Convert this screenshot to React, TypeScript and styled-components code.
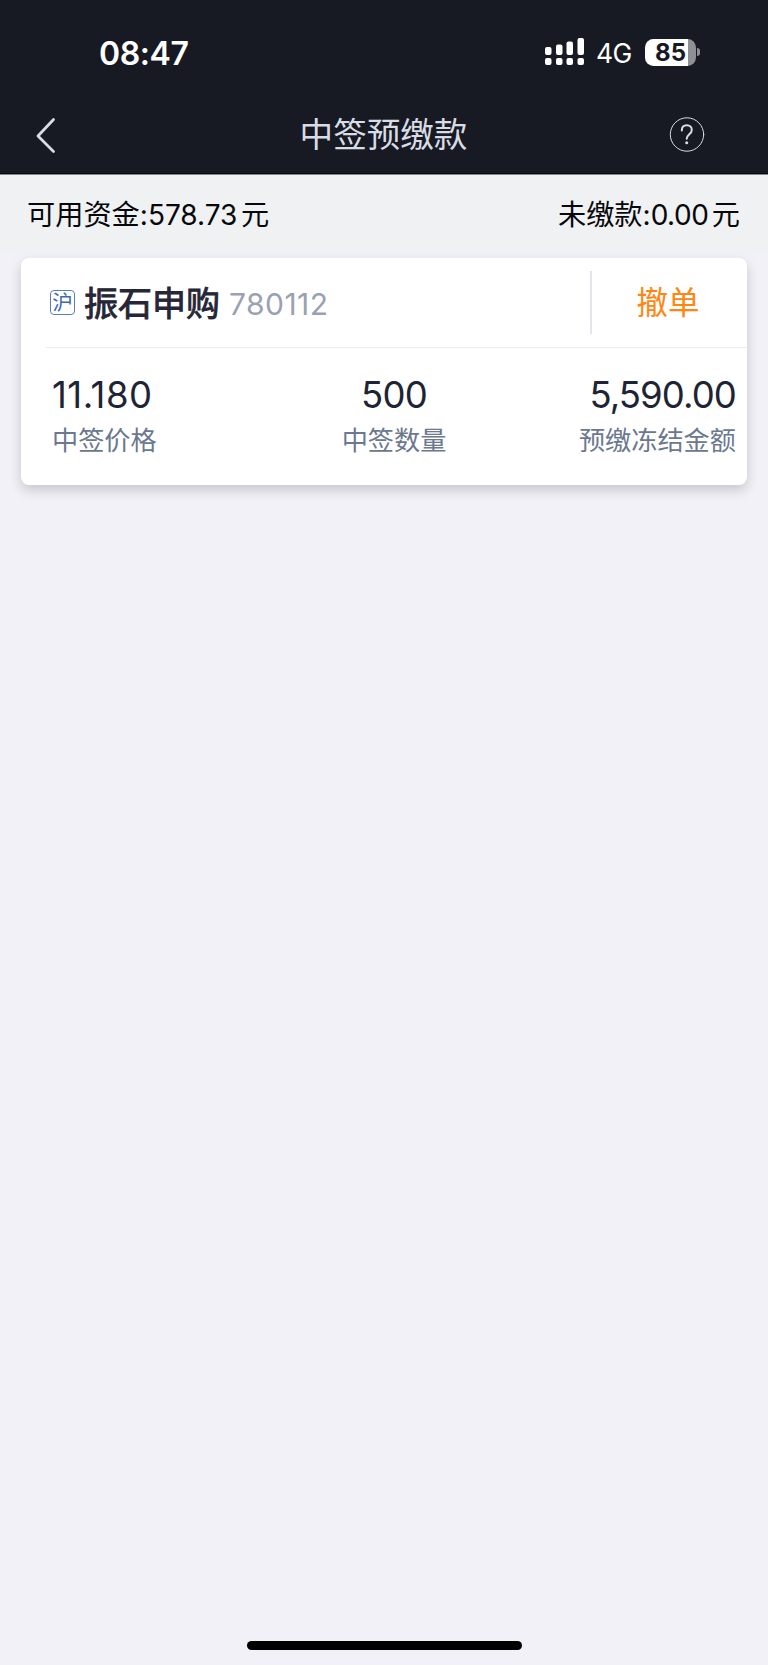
import React from 'react';
import styled, { createGlobalStyle } from 'styled-components';

const GlobalStyle = createGlobalStyle`
  *, *::before, *::after { box-sizing: border-box; }
  html, body { margin: 0; padding: 0; background: #f2f1f7; }
  body { font-family: Inter, "Noto Sans CJK SC", sans-serif; }
`;

const Screen = styled.div`
  width: 768px;
  height: 1665px;
  display: flex;
  flex-direction: column;
  background: #f2f1f7;
  overflow: hidden;
  white-space: nowrap;
`;

const Header = styled.header`
  height: 175px;
  flex: none;
  background: #171a22;
  border-bottom: 1px solid #85868b;
  box-shadow: inset 0 -1px 0 #090b12;
`;

const StatusBar = styled.div`
  height: 104px;
  padding: 0 68px 0 99px;
  display: flex;
  align-items: center;
  color: #fff;
`;

const Time = styled.span`
  flex: 1;
  padding-top: 3px;
  font-size: 32px;
  font-weight: 600;
  line-height: 40px;
  letter-spacing: -0.4px;
`;

const Network = styled.span`
  margin: 2px 13px 0 12px;
  width: 36px;
  font-size: 26.5px;
  line-height: 32px;
  letter-spacing: -0.6px;
`;

const Battery = styled.div`
  display: flex;
  align-items: center;
`;

const BatteryBody = styled.div`
  width: 51px;
  height: 27px;
  border-radius: 8.5px;
  display: flex;
  justify-content: center;
  align-items: center;
  background: linear-gradient(90deg, #fff 0 43px, #8f9096 43px);
  color: #171a22;
  font-size: 24px;
  font-weight: 700;
  line-height: 27px;
`;

const BatteryCap = styled.div`
  width: 3px;
  height: 8px;
  margin-left: 1px;
  border-radius: 0 4px 4px 0;
  background: #8f9096;
`;

const NavBar = styled.div`
  height: 70px;
  padding: 0 63px 0 35px;
  display: grid;
  grid-template-columns: 68px 1fr 68px;
  align-items: start;
`;

const BackIcon = styled.svg`
  width: 68px;
  height: 38px;
  margin-top: 13px;
`;

const Title = styled.h1`
  margin: 7px 0 0;
  padding-left: 27px;
  text-align: center;
  color: #d9dce6;
  font-size: 33.6px;
  font-weight: 400;
  line-height: 48px;
`;

const HelpIcon = styled.svg`
  width: 36px;
  height: 36px;
  margin: 12px 0 0 32px;
`;

const Summary = styled.section`
  height: 78px;
  flex: none;
  padding: 20px 28px 0 27px;
  display: flex;
  justify-content: space-between;
  background: #f0f1f3;
  color: #07080b;
  font-size: 28.2px;
  line-height: 40px;
`;

const Amount = styled.span<{ $tracking?: number }>`
  margin-right: 3.5px;
  font-size: 28px;
  letter-spacing: ${({ $tracking = 0 }) => $tracking}px;
`;

const Card = styled.section`
  width: 726px;
  height: 227px;
  margin: 5px 0 0 21px;
  flex: none;
  background: #fff;
  border-radius: 8px;
  box-shadow: 0 5px 12px rgba(30, 30, 45, 0.2);
`;

const CardHead = styled.div`
  height: 90px;
  margin-left: 25px;
  padding-left: 4px;
  display: flex;
  align-items: center;
  border-bottom: 1px solid #ededf0;
`;

const Market = styled.span`
  width: 25px;
  height: 25px;
  border: 1px solid #5b7fbd;
  border-radius: 4px;
  display: flex;
  justify-content: center;
  align-items: center;
  color: #3e68b0;
  font-size: 20.5px;
  line-height: 22px;
`;

const StockName = styled.h2`
  margin: 2px 0 0 9px;
  color: #262636;
  font-size: 34px;
  font-weight: 400;
  -webkit-text-stroke: 0.9px #262636;
  line-height: 48px;
`;

const StockCode = styled.span`
  flex: 1;
  margin: 2px 0 0 9px;
  color: #9aa1b2;
  font-size: 30px;
  line-height: 40px;
  letter-spacing: 0.45px;
`;

const CancelButton = styled.button`
  width: 157px;
  height: 63px;
  padding: 0 3px 0 0;
  border: 0;
  border-left: 2px solid #e4e5eb;
  background: none;
  color: #ff8610;
  font-family: inherit;
  font-size: 31.5px;
  line-height: 48px;
`;

const Metrics = styled.div`
  display: flex;
  justify-content: space-between;
  padding: 23px 11px 0 31px;
`;

const Metric = styled.div<{ $align: 'left' | 'center' | 'right' }>`
  display: flex;
  flex-direction: column;
  width: 160px;
  text-align: ${({ $align }) => $align};
`;

const Value = styled.span<{ $tracking?: number }>`
  color: #1e2433;
  font-size: 36.5px;
  line-height: 48px;
  letter-spacing: ${({ $tracking = 0 }) => $tracking}px;
`;

const Label = styled.span`
  color: #6b788f;
  font-size: 26.2px;
  line-height: 44px;
`;

const HomeIndicator = styled.div`
  width: 275px;
  height: 9px;
  margin: auto 246px 15px 247px;
  border-radius: 5px;
  background: #000;
`;

const signalBars = [
  { x: 0, y: 9, h: 8 },
  { x: 11, y: 6.5, h: 10.5 },
  { x: 21.5, y: 3.5, h: 13.5 },
  { x: 32.5, y: 0, h: 17 },
];

const Signal = () => (
  <svg width="39" height="28" viewBox="0 0 39 28" fill="#fff">
    {signalBars.map(({ x, y, h }) => (
      <g key={x}>
        <rect x={x} y={y} width="6.5" height={h} rx="2" />
        <rect x={x} y="20" width="6.5" height="7" rx="2" />
      </g>
    ))}
  </svg>
);

export default function App() {
  return (
    <>
      <GlobalStyle />
      <Screen>
        <Header>
          <StatusBar>
            <Time>08:47</Time>
            <Signal />
            <Network>4G</Network>
            <Battery>
              <BatteryBody>85</BatteryBody>
              <BatteryCap />
            </Battery>
          </StatusBar>
          <NavBar>
            <BackIcon viewBox="0 0 68 38" fill="none" stroke="#d9dce6" strokeWidth="2.8" strokeLinecap="round" strokeLinejoin="round">
              <path d="M18.5 2.5 3 19l15.5 15.5" />
            </BackIcon>
            <Title>中签预缴款</Title>
            <HelpIcon viewBox="0 0 36 36" fill="none" stroke="#d9dce6" strokeLinecap="round">
              <circle cx="18" cy="18.5" r="16.7" strokeWidth="1" />
              <path d="M12.8 14.4c0-3.2 2-5.2 5-5.2s5 2 5 4.7c0 4.2-5.1 4.4-5.1 8.8" strokeWidth="2" />
              <circle cx="17.7" cy="26.8" r="1.5" fill="#d9dce6" stroke="none" />
            </HelpIcon>
          </NavBar>
        </Header>
        <Summary>
          <span>可用资金:<Amount>578.73</Amount>元</span>
          <span>未缴款:<Amount $tracking={-0.5}>0.00</Amount>元</span>
        </Summary>
        <Card>
          <CardHead>
            <Market>沪</Market>
            <StockName>振石申购</StockName>
            <StockCode>780112</StockCode>
            <CancelButton>撤单</CancelButton>
          </CardHead>
          <Metrics>
            <Metric $align="left">
              <Value $tracking={0.5}>11.180</Value>
              <Label>中签价格</Label>
            </Metric>
            <Metric $align="center">
              <Value $tracking={-0.8}>500</Value>
              <Label>中签数量</Label>
            </Metric>
            <Metric $align="right">
              <Value $tracking={-0.9}>5,590.00</Value>
              <Label>预缴冻结金额</Label>
            </Metric>
          </Metrics>
        </Card>
        <HomeIndicator />
      </Screen>
    </>
  );
}
